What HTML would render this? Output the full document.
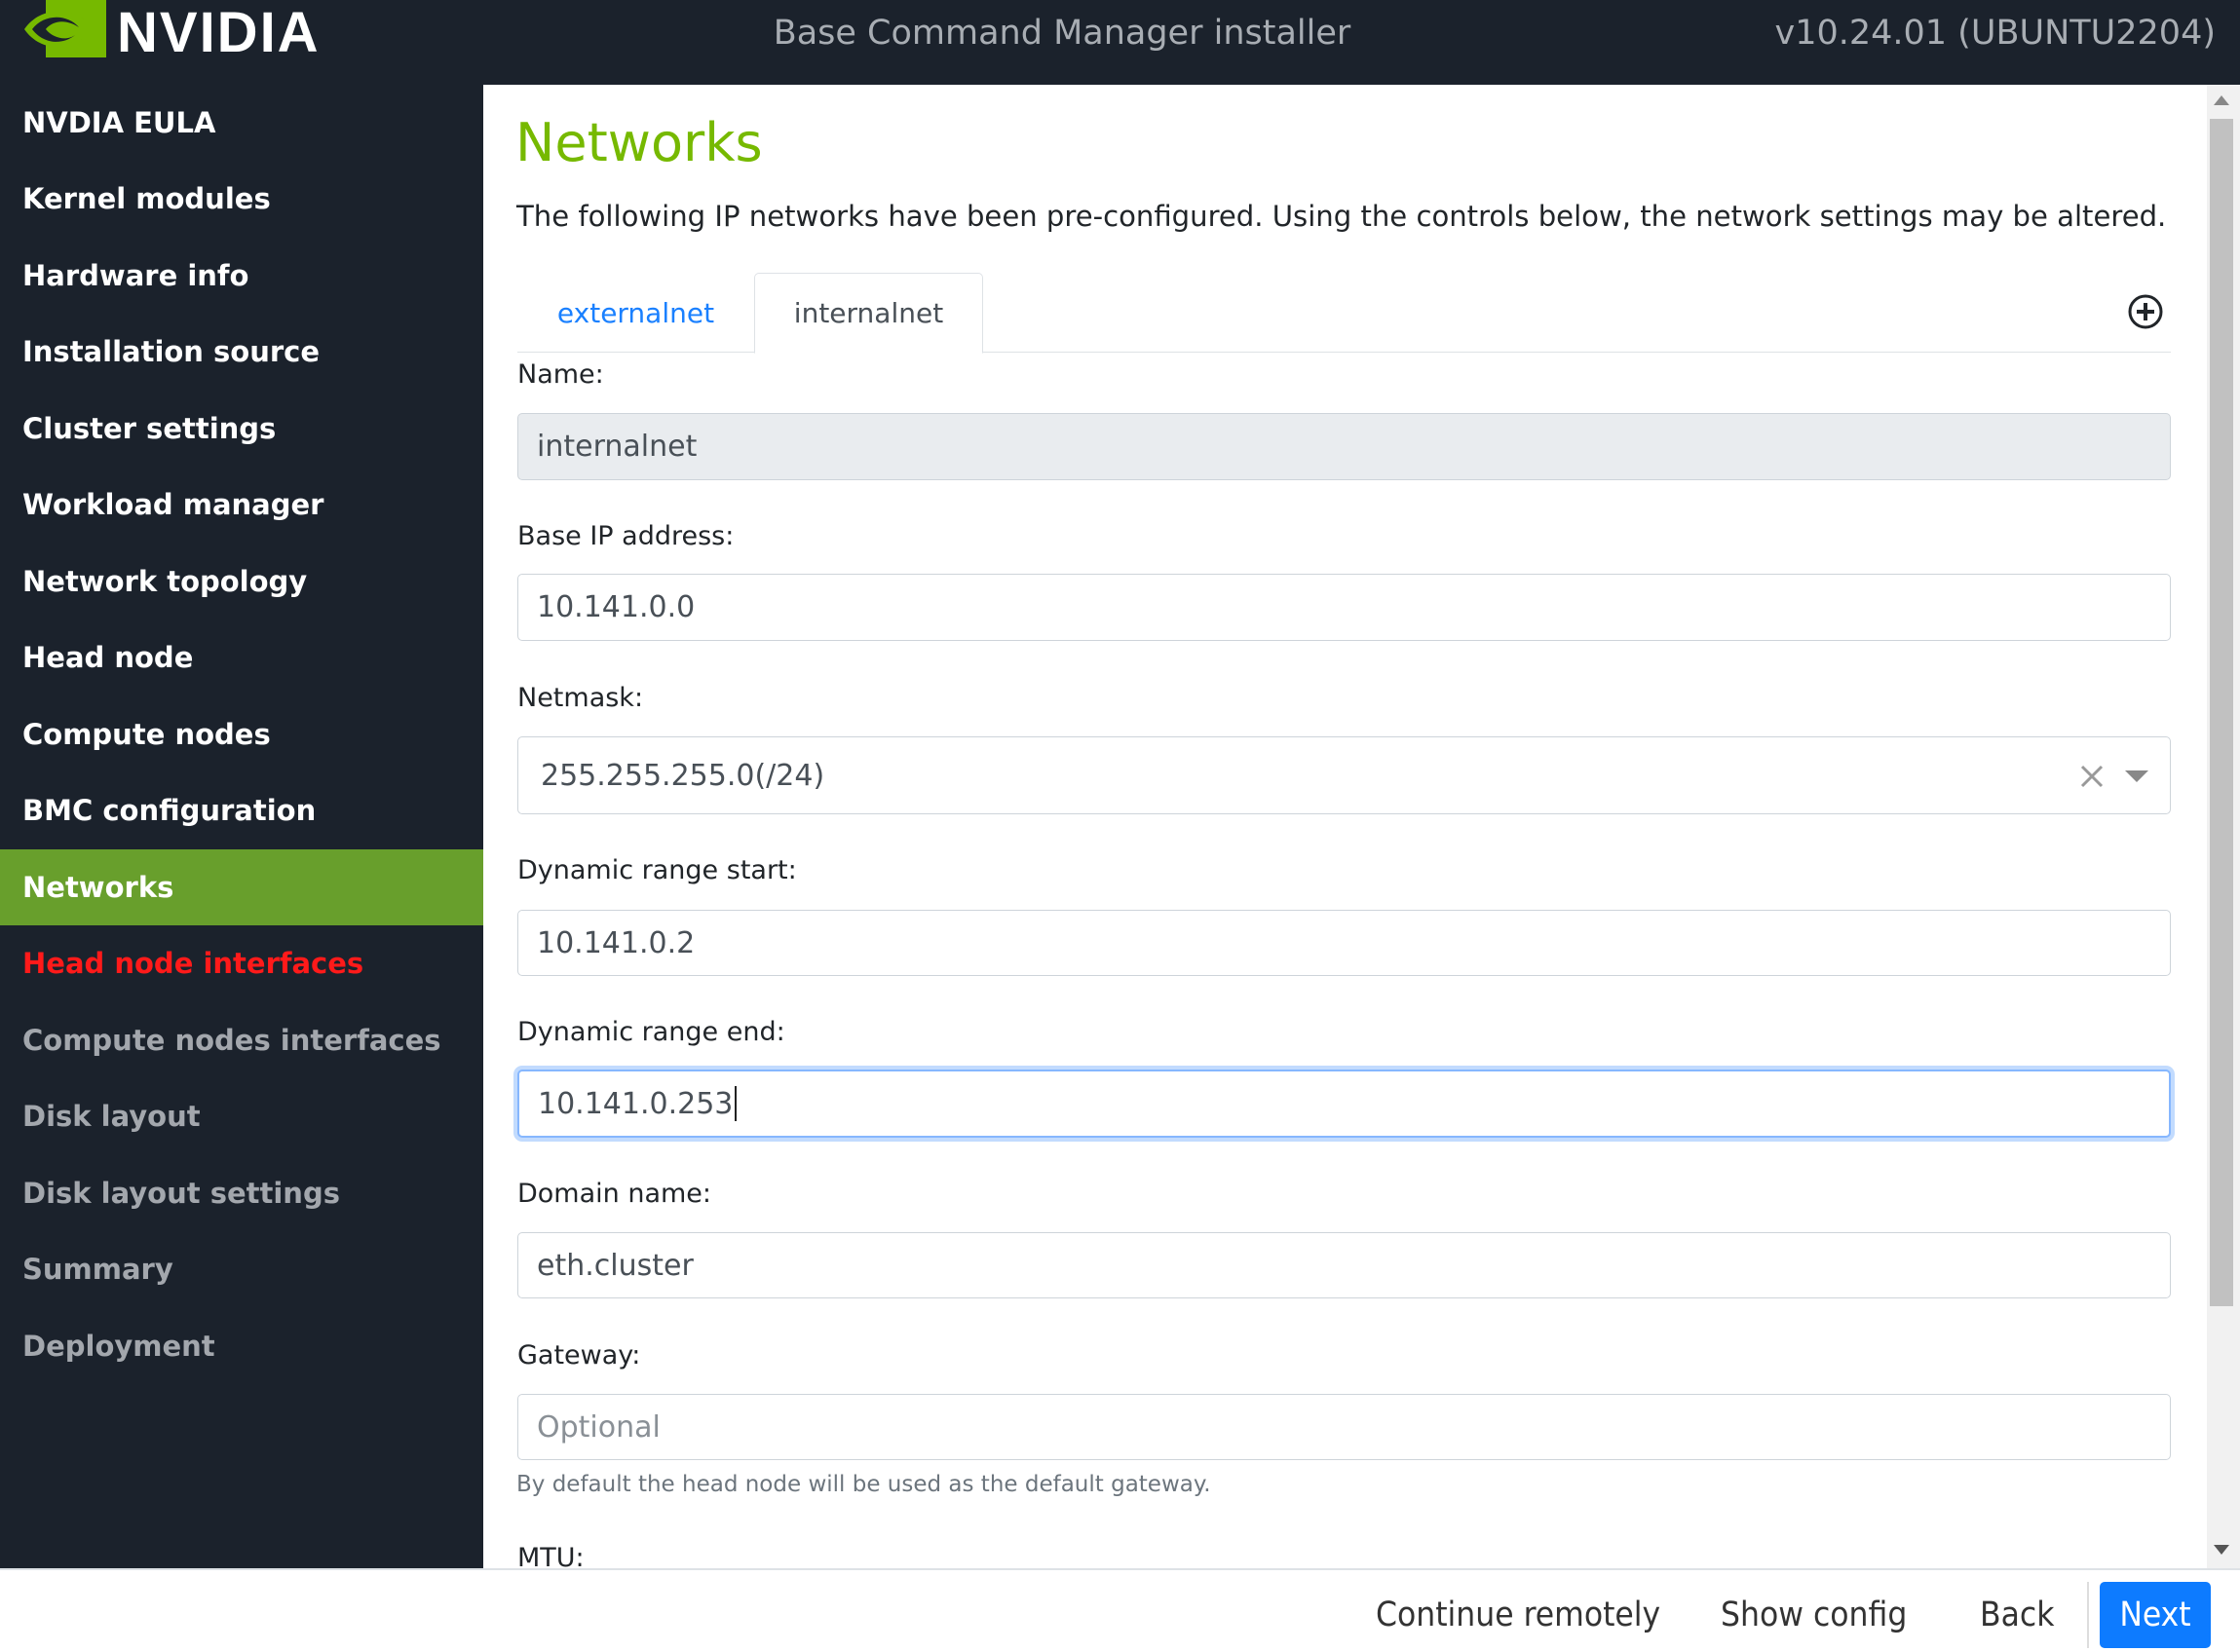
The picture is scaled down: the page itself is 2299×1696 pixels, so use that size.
<!DOCTYPE html>
<html><head><meta charset="utf-8"><style>
*{box-sizing:border-box;margin:0;padding:0}
body{width:2299px;height:1696px;overflow:hidden;font-family:"DejaVu Sans","Liberation Sans",sans-serif;background:#fff;position:relative}
.top{position:absolute;left:0;top:0;width:2299px;height:87px;background:#1b222c}
.side{position:absolute;left:0;top:87px;width:496px;height:1523px;background:#1b222c}
.si{position:absolute;left:0;width:496px;height:78px;line-height:78px;padding-left:23px;font-weight:bold;font-size:29px;color:#fff}
.lbl{position:absolute;left:531px;font-size:27px;color:#212529}
.inp{position:absolute;left:531px;width:1697px;border:1.5px solid #ced4da;border-radius:5px;font-size:30px;color:#495057;padding-left:19px;display:flex;align-items:center;background:#fff}
.ft{position:absolute;top:1626px;font-family:"DejaVu Sans Condensed","DejaVu Sans",sans-serif;font-size:35px;color:#333;line-height:64px}
</style></head><body>
<div class="top">
<svg style="position:absolute;left:25px;top:0" width="84" height="59" viewBox="0 0 84 59"><rect x="22" y="0" width="62" height="59" fill="#76b900"/><path d="M0 30 C15 8 45 6 64 22 C50 12 30 12 18 30 C30 46 50 48 62 38 C45 54 15 52 0 30Z" fill="#76b900"/><path d="M8 30 C20 14 44 14 56 28 C44 20 30 20 22 30 C30 40 44 42 52 36 C40 46 20 46 8 30Z" fill="#1b222c"/><path d="M22 30 C28 22 40 22 46 28 C40 34 30 36 26 30Z" fill="#76b900"/></svg>
<div style="position:absolute;left:120px;top:0px;font-family:'Liberation Sans',sans-serif;font-weight:bold;font-size:58px;color:#fff;letter-spacing:2px">NVIDIA</div>
<div style="position:absolute;left:0;width:2180px;text-align:center;top:14px;font-size:35px;color:#a8adb3">Base Command Manager installer</div>
<div style="position:absolute;right:25px;top:14px;font-size:35px;color:#a8adb3">v10.24.01 (UBUNTU2204)</div>
</div>
<div class="side">
<div class="si" style="top:0">NVDIA EULA</div>
<div class="si" style="top:78px">Kernel modules</div>
<div class="si" style="top:157px">Hardware info</div>
<div class="si" style="top:235px">Installation source</div>
<div class="si" style="top:314px">Cluster settings</div>
<div class="si" style="top:392px">Workload manager</div>
<div class="si" style="top:471px">Network topology</div>
<div class="si" style="top:549px">Head node</div>
<div class="si" style="top:628px">Compute nodes</div>
<div class="si" style="top:706px">BMC configuration</div>
<div class="si" style="top:785px;background:#689f2c">Networks</div>
<div class="si" style="top:863px;color:#ff1a1a">Head node interfaces</div>
<div class="si" style="top:942px;color:#a3a7ad">Compute nodes interfaces</div>
<div class="si" style="top:1020px;color:#a3a7ad">Disk layout</div>
<div class="si" style="top:1099px;color:#a3a7ad">Disk layout settings</div>
<div class="si" style="top:1177px;color:#a3a7ad">Summary</div>
<div class="si" style="top:1256px;color:#a3a7ad">Deployment</div>
</div>
<div style="position:absolute;left:529px;top:115px;font-size:54px;color:#76b900">Networks</div>
<div style="position:absolute;left:530px;top:205px;font-size:29.1px;color:#212529;white-space:nowrap">The following IP networks have been pre-configured. Using the controls below, the network settings may be altered.</div>
<div style="position:absolute;left:531px;top:361px;width:1697px;border-top:1.5px solid #dee2e6"></div>
<div style="position:absolute;left:531px;top:281px;width:243px;height:81px;line-height:81px;text-align:center;font-size:28px;color:#1a80ff">externalnet</div>
<div style="position:absolute;left:774px;top:280px;width:235px;height:83px;line-height:81px;text-align:center;font-size:28px;color:#495057;border:1.5px solid #dee2e6;border-bottom:1.5px solid #fff;border-radius:5px 5px 0 0;background:#fff">internalnet</div>
<svg style="position:absolute;left:2183px;top:301px" width="38" height="38" viewBox="0 0 38 38"><circle cx="19" cy="19" r="16" fill="none" stroke="#212529" stroke-width="3"/><path d="M19 10V28M10 19H28" stroke="#212529" stroke-width="4"/></svg>
<div class="lbl" style="top:369px">Name:</div>
<div class="inp" style="top:424px;height:69px;background:#e9ecef">internalnet</div>
<div class="lbl" style="top:535px">Base IP address:</div>
<div class="inp" style="top:589px;height:69px">10.141.0.0</div>
<div class="lbl" style="top:701px">Netmask:</div>
<div class="inp" style="top:756px;height:80px;padding-left:23px">255.255.255.0(/24)
<svg style="position:absolute;right:68px;top:28px" width="24" height="24"><path d="M2 2L22 22M22 2L2 22" stroke="#999" stroke-width="3"/></svg>
<svg style="position:absolute;right:22px;top:34px" width="24" height="14"><path d="M0 0H24L12 12Z" fill="#888"/></svg></div>
<div class="lbl" style="top:878px">Dynamic range start:</div>
<div class="inp" style="top:934px;height:68px">10.141.0.2</div>
<div class="lbl" style="top:1044px">Dynamic range end:</div>
<div class="inp" style="top:1098px;height:70px;border:2px solid #86b7fe;box-shadow:0 0 0 4px rgba(13,110,253,.25)">10.141.0.253<span style="display:inline-block;width:2px;height:36px;background:#222;margin-left:2px"></span></div>
<div class="lbl" style="top:1210px">Domain name:</div>
<div class="inp" style="top:1265px;height:68px">eth.cluster</div>
<div class="lbl" style="top:1376px">Gateway:</div>
<div class="inp" style="top:1431px;height:68px;color:#8a9096">Optional</div>
<div style="position:absolute;left:530px;top:1511px;font-size:23px;color:#6c757d">By default the head node will be used as the default gateway.</div>
<div class="lbl" style="top:1584px">MTU:</div>
<div style="position:absolute;left:2265px;top:87px;width:34px;height:1523px;background:#f1f1f1"></div>
<div style="position:absolute;left:2268px;top:122px;width:24px;height:1219px;background:#c1c1c1"></div>
<svg style="position:absolute;left:2272px;top:98px" width="16" height="10"><path d="M0 10H16L8 0Z" fill="#888"/></svg>
<svg style="position:absolute;left:2272px;top:1586px" width="16" height="10"><path d="M0 0H16L8 10Z" fill="#555"/></svg>
<div style="position:absolute;left:0;top:1610px;width:2299px;height:86px;background:#fff;border-top:2px solid #dee2e6"></div>
<div class="ft" style="left:1412px">Continue remotely</div>
<div class="ft" style="left:1766px">Show config</div>
<div class="ft" style="left:2032px">Back</div>
<div style="position:absolute;left:2142px;top:1624px;width:2px;height:68px;background:#ddd"></div>
<div class="ft" style="left:2155px;top:1624px;width:114px;height:68px;line-height:68px;text-align:center;background:#0d7bff;color:#fff;border-radius:5px">Next</div>
</body></html>
